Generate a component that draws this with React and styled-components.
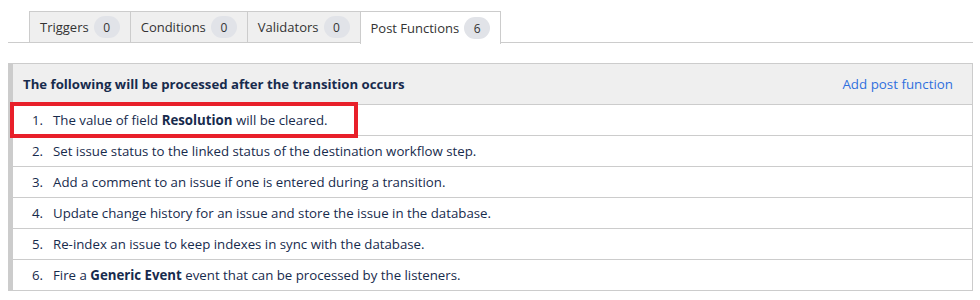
import React from "react";
import styled, { createGlobalStyle } from "styled-components";

const GlobalStyle = createGlobalStyle`
  body {
    margin: 0;
    background: #ffffff;
    font-family: "Open Sans", "Noto Sans", sans-serif;
    color: #172b4d;
  }
`;

const tabs = [
  { label: "Triggers", count: 0 },
  { label: "Conditions", count: 0 },
  { label: "Validators", count: 0 },
  { label: "Post Functions", count: 6, active: true },
];

const items = [
  <>The value of field <b>Resolution</b> will be cleared.</>,
  <>Set issue status to the linked status of the destination workflow step.</>,
  <>Add a comment to an issue if one is entered during a transition.</>,
  <>Update change history for an issue and store the issue in the database.</>,
  <>Re-index an issue to keep indexes in sync with the database.</>,
  <>Fire a <b>Generic Event</b> event that can be processed by the listeners.</>,
];

const App = () => {
  return (
    <Page>
      <GlobalStyle />
      <TabBar>
        {tabs.map((t) => (
          <Tab key={t.label} $active={t.active}>
            {t.label}
            <Badge>{t.count}</Badge>
          </Tab>
        ))}
      </TabBar>

      <Panel>
        <PanelHeader>
          <h4>The following will be processed after the transition occurs</h4>
          <AddLink href="#add">Add post function</AddLink>
        </PanelHeader>
        {items.map((content, i) => (
          <Row key={i}>
            <Num>{i + 1}.</Num>
            <span>{content}</span>
            {i === 0 && <Highlight />}
          </Row>
        ))}
      </Panel>
    </Page>
  );
};

export default App;

const Page = styled.div`
  padding: 11px 7px 0 8px;
  font-size: 13px;
`;

const TabBar = styled.div`
  display: flex;
  padding-left: 21px;
  border-bottom: 1px solid #cccccc;
  height: 31px;
`;

const Tab = styled.div`
  display: flex;
  align-items: center;
  gap: 5px;
  padding: 0 10px;
  height: ${(p) => (p.$active ? "32px" : "30px")};
  background: ${(p) => (p.$active ? "#ffffff" : "#efefef")};
  border: 1px solid #cccccc;
  border-bottom: none;
  margin-left: -1px;
  color: #333333;
  &:first-child {
    margin-left: 0;
  }
`;

const Badge = styled.span`
  display: inline-flex;
  align-items: center;
  justify-content: center;
  min-width: 26px;
  height: 22px;
  border-radius: 11px;
  background: #e1e3e8;
  font-size: 12px;
  color: #333333;
`;

const Panel = styled.div`
  margin-top: 20px;
  border: 1px solid #cccccc;
  border-left: 5px solid #cccccc;
`;

const PanelHeader = styled.div`
  display: flex;
  align-items: center;
  justify-content: space-between;
  height: 40px;
  padding: 0 19px 0 10px;
  background: #efefef;
  border-bottom: 1px solid #cccccc;

  h4 {
    margin: 0;
    font-size: 13.2px;
    font-weight: 700;
    color: #172b4d;
  }
`;

const AddLink = styled.a`
  color: #2f6fde;
  text-decoration: none;
  font-size: 13.35px;
`;

const Row = styled.div`
  position: relative;
  display: flex;
  align-items: center;
  height: 30px;
  border-bottom: 1px solid #cccccc;
  color: #172b4d;
  font-size: 13.25px;

  &:last-child {
    border-bottom: none;
  }

  b {
    font-weight: 700;
  }
`;

const Num = styled.span`
  width: 30px;
  text-align: right;
  margin-right: 10px;
`;

const Highlight = styled.div`
  position: absolute;
  left: -3px;
  top: -3px;
  width: 340px;
  height: 28px;
  border: 4px solid #e8202a;
  pointer-events: none;
`;
